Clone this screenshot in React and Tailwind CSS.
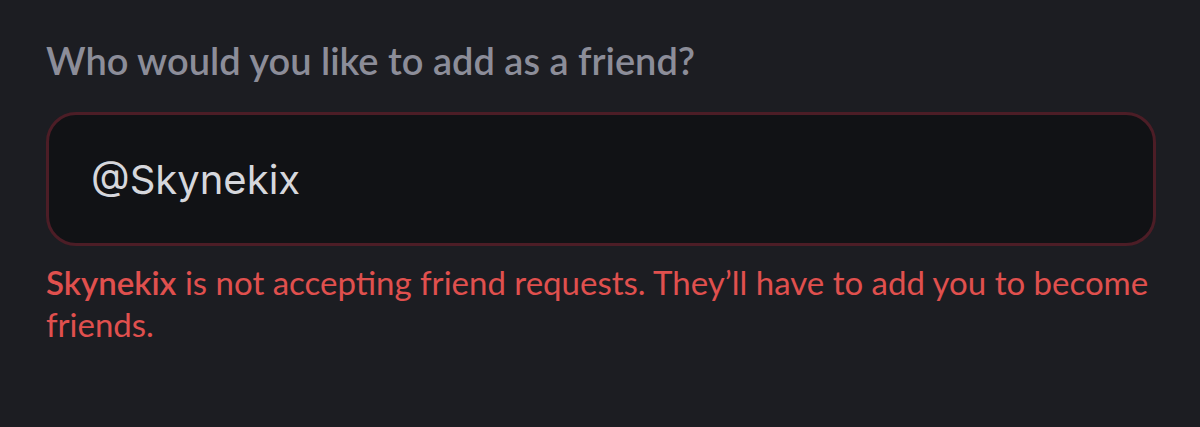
export default function App() {
  return (
    <div className="w-[1200px] h-[427px] bg-[#1c1d22] px-[46px] pt-[36px] overflow-hidden" style={{ fontFamily: 'Lato, sans-serif' }}>
      <div className="text-[38px] leading-[48px] font-semibold text-[#8c8d99]">Who would you like to add as a friend?</div>
      <div className="mt-[28px] w-[1110px] h-[134px] rounded-[30px] border-[3px] border-[#4c1d26] bg-[#111215] flex items-center pl-[42px]">
        <span className="text-[40px] text-[#d6d7dc] pt-[2px]" style={{ fontFamily: 'Inter, sans-serif' }}>@Skynekix</span>
      </div>
      <div className="mt-[15px] w-[1140px] text-[33px] leading-[42px] text-[#e0504e]">
        <span className="font-semibold">Skynekix</span> is not accepting friend requests. They’ll have to add you to become friends.
      </div>
    </div>
  );
}
